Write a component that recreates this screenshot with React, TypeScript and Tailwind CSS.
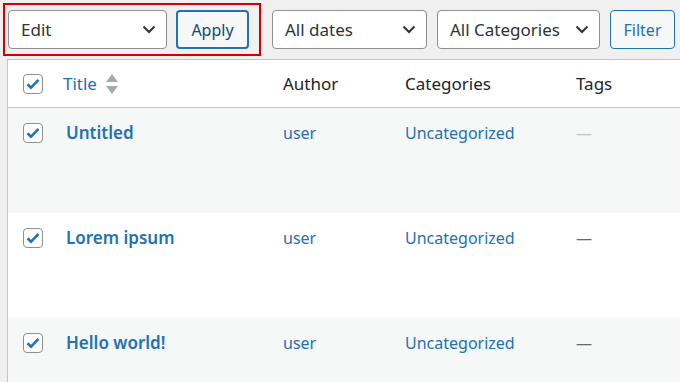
const Chevron = () => (
  <svg width="14" height="9" viewBox="0 0 14 9" fill="none">
    <path d="M1.5 1.5 7 7l5.5-5.5" stroke="#2c3338" strokeWidth="2" />
  </svg>
);

const Select = ({ label, width }: { label: string; width: string }) => (
  <div
    className={`${width} h-[39px] flex items-center justify-between pl-[12px] pr-[10px] bg-white border border-[#8c8f94] rounded-[4px] text-[#2c3338] text-[17px]`}
  >
    <span>{label}</span>
    <Chevron />
  </div>
);

const Checkbox = () => (
  <div className="w-[20px] h-[20px] border border-[#8c8f94] rounded-[4px] bg-white flex items-center justify-center">
    <svg width="14" height="12" viewBox="0 0 14 12">
      <path d="M1.5 6.2 5 9.6 12.5 1.8" stroke="#2271b1" strokeWidth="2.6" fill="none" />
    </svg>
  </div>
);

const SortArrows = () => (
  <svg width="12" height="20" viewBox="0 0 12 20" className="ml-[9px]">
    <path d="M6 0 12 8H0z" fill="#a7aaad" />
    <path d="M0 12h12l-6 8z" fill="#a7aaad" />
  </svg>
);

interface Post {
  id: string;
  title: string;
  dash: string;
  bg: string;
}

const posts: Post[] = [
  { id: "p1", title: "Untitled", dash: "text-[#c3c4c7]", bg: "bg-[#f6f7f7]" },
  { id: "p2", title: "Lorem ipsum", dash: "text-[#646970]", bg: "bg-white" },
  { id: "p3", title: "Hello world!", dash: "text-[#646970]", bg: "bg-[#f6f7f7]" },
];

const cols = "grid grid-cols-[55px_220px_122px_171px_1fr]";

export default function App() {
  return (
    <div
      className="w-[680px] h-[382px] overflow-hidden bg-[#f0f0f1] text-[17px]"
      style={{ fontFamily: '"Noto Sans", "Open Sans", sans-serif' }}
    >
      <div className="flex items-start pt-[3px] pl-[3px] h-[59px]">
        <div className="w-[258px] h-[53px] border-2 border-[#d40000] flex items-start gap-[9px] pl-[3px] pt-[5px]">
          <Select label="Edit" width="w-[159px]" />
          <div className="w-[73px] h-[39px] flex items-center justify-center bg-[#f6f7f7] border-2 border-[#2271b1] rounded-[4px] text-[#0a4b78] text-[16px]">
            Apply
          </div>
        </div>
        <div className="flex items-start gap-[10px] ml-[11px] mt-[7px]">
          <Select label="All dates" width="w-[155px]" />
          <Select label="All Categories" width="w-[163px]" />
          <div className="w-[65px] h-[39px] flex items-center justify-center bg-[#f6f7f7] border border-[#2271b1] rounded-[4px] text-[#2271b1] text-[16px]">
            Filter
          </div>
        </div>
      </div>

      <div className="ml-[7px] w-[690px] border border-[#c3c4c7] bg-white">
        <div className={`${cols} h-[48px] items-center border-b border-[#c3c4c7] text-[#1d2327]`}>
          <div className="pl-[15px]">
            <Checkbox />
          </div>
          <div className="flex items-center text-[#2271b1]">
            Title
            <SortArrows />
          </div>
          <div>Author</div>
          <div>Categories</div>
          <div>Tags</div>
        </div>
        {posts.map((post) => (
          <div key={post.id} className={`${cols} ${post.bg} h-[105px] items-start text-[16px] leading-[22px]`}>
            <div className="pl-[15px] pt-[15px]">
              <Checkbox />
            </div>
            <div className="pl-[3px] pt-[14px] font-semibold text-[17px] text-[#2271b1]">{post.title}</div>
            <div className="pt-[14px] text-[#2271b1]">user</div>
            <div className="pt-[14px] text-[#2271b1]">Uncategorized</div>
            <div className={`pt-[14px] ${post.dash}`}>—</div>
          </div>
        ))}
      </div>
    </div>
  );
}
